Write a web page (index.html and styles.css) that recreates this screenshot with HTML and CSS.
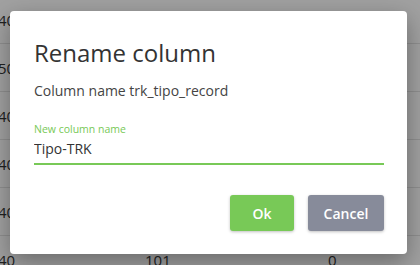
FILE: index.html
```html
<!DOCTYPE html>
<html lang="en">
<head>
    <meta charset="UTF-8">
    <meta name="viewport" content="width=device-width, initial-scale=1.0">
    <title>Rename column</title>
    <link rel="stylesheet" href="styles.css">
</head>
<body>
    <div class="grid">
        <div class="row"><span class="c1">40</span><span class="c2"></span><span class="c3"></span></div>
        <div class="row"><span class="c1">50</span><span class="c2"></span><span class="c3"></span></div>
        <div class="row"><span class="c1">40</span><span class="c2"></span><span class="c3"></span></div>
        <div class="row"><span class="c1">40</span><span class="c2"></span><span class="c3"></span></div>
        <div class="row"><span class="c1">40</span><span class="c2"></span><span class="c3"></span></div>
        <div class="row"><span class="c1">40</span><span class="c2">101</span><span class="c3">0</span></div>
    </div>
    <div class="overlay"></div>
    <div class="dialog">
        <h2 class="title">Rename column</h2>
        <p class="info">Column name trk_tipo_record</p>
        <label class="field">
            <span class="field-label">New column name</span>
            <input class="field-input" type="text" value="Tipo-TRK">
        </label>
        <div class="actions">
            <button class="btn btn-ok">Ok</button>
            <button class="btn btn-cancel">Cancel</button>
        </div>
    </div>
</body>
</html>
```

FILE: styles.css
```css
body {
    margin: 0;
    width: 420px;
    height: 265px;
    overflow: hidden;
    background: #fff;
    font-family: "Open Sans", "Liberation Sans", sans-serif;
    position: relative;
}
.grid {
    height: 265px;
    overflow: hidden;
}
.row {
    display: flex;
    align-items: center;
    height: 47px;
    border-bottom: 1px solid #e2e2e2;
    font-size: 15px;
    color: #333;
}
.row:first-child {
    margin-top: -4px;
}
.c1 { width: 147px; margin-left: -2px; }
.c2 { width: 183px; }
.c3 { width: 40px; }
.overlay {
    position: absolute;
    inset: 0;
    background: rgba(0, 0, 0, 0.37);
}
.dialog {
    position: absolute;
    left: 10px;
    top: 11px;
    width: 397px;
    height: 243px;
    box-sizing: border-box;
    padding: 26px 23px 23px 24px;
    background: #fff;
    border-radius: 4px;
    box-shadow: 0 8px 24px rgba(0, 0, 0, 0.35);
    display: flex;
    flex-direction: column;
}
.title {
    margin: 0;
    font-size: 24px;
    line-height: 32px;
    font-weight: 400;
    color: #333;
}
.info {
    margin: 12px 0 0;
    font-size: 14px;
    line-height: 20px;
    color: #444;
}
.field {
    display: flex;
    flex-direction: column;
    margin-top: 21px;
}
.field-label {
    font-size: 10.5px;
    line-height: 14px;
    color: #78c957;
}
.field-input {
    box-sizing: border-box;
    margin-top: 2px;
    padding: 0 0 5px;
    border: none;
    border-bottom: 2px solid #78c957;
    outline: none;
    font-family: inherit;
    font-size: 14px;
    line-height: 20px;
    height: 27px;
    color: #333;
}
.actions {
    display: flex;
    justify-content: flex-end;
    gap: 14px;
    margin-top: 30px;
}
.btn {
    height: 36px;
    border: none;
    border-radius: 3px;
    font-family: inherit;
    font-size: 14px;
    font-weight: 600;
    color: #fff;
    box-shadow: 0 1px 3px rgba(0, 0, 0, 0.25);
}
.btn-ok {
    width: 64px;
    background: #78c957;
}
.btn-cancel {
    width: 76px;
    background: #878b9a;
}
```
